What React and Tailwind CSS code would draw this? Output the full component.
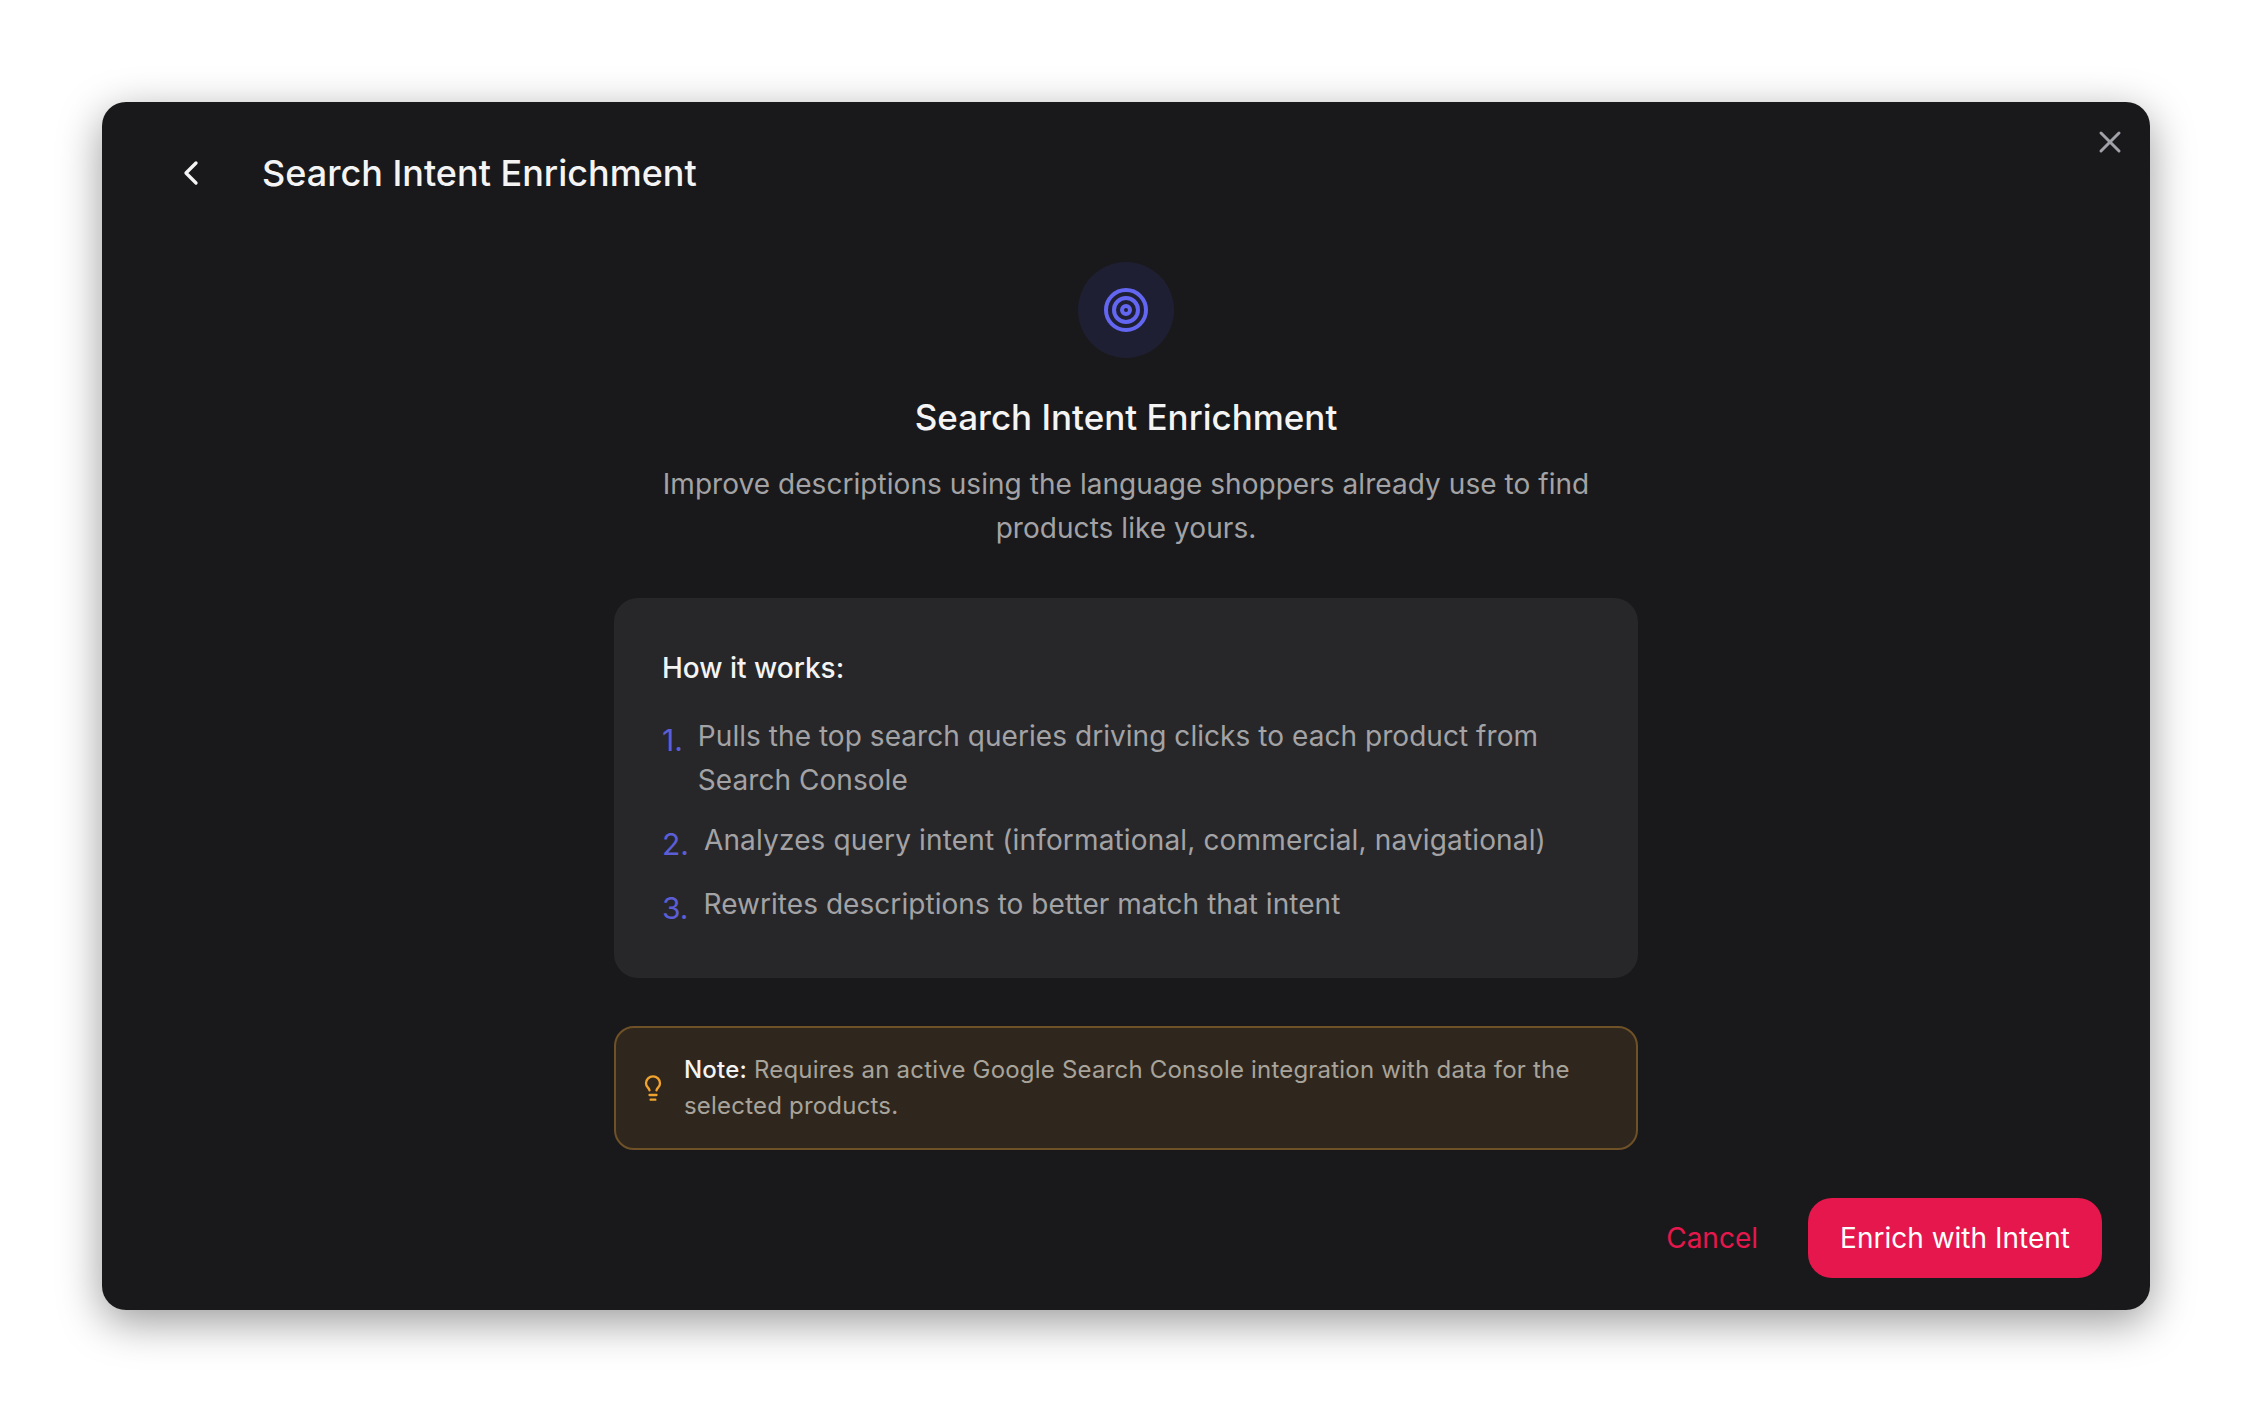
import { ChevronLeft, Lightbulb, Target, X } from "lucide-react";

const STEPS = [
  {
    num: "1.",
    text: "Pulls the top search queries driving clicks to each product from Search Console",
    row: "mb-[16px]",
    track: "tracking-[0.05px]",
  },
  {
    num: "2.",
    text: "Analyzes query intent (informational, commercial, navigational)",
    row: "mb-[16px]",
    track: "tracking-[0.15px]",
  },
  {
    num: "3.",
    text: "Rewrites descriptions to better match that intent",
    row: "",
    track: "tracking-[0.05px]",
  },
];

const App = () => {
  return (
    <div className="min-h-screen bg-white p-[102px] font-['Inter',sans-serif]">
      {/* Modal */}
      <div className="relative h-[1208px] w-[2048px] rounded-[24px] bg-[#19191b] shadow-[0_12px_44px_rgba(0,0,0,0.4)]">
        <button className="absolute right-[22px] top-[22px] text-[#a1a1aa]">
          <X size={36} strokeWidth={2} />
        </button>

        {/* Header */}
        <div className="flex h-[142px] items-center pl-[69px]">
          <ChevronLeft size={40} strokeWidth={2} className="text-[#f4f4f5]" />
          <h1 className="ml-[51px] text-[36px] font-medium leading-[48px] text-[#f4f4f5]">
            Search Intent Enrichment
          </h1>
        </div>

        <div className="mx-auto flex w-[1024px] flex-col items-center pt-[18px]">
          <div className="flex size-[96px] items-center justify-center rounded-full bg-[#1f1f33]">
            <Target size={48} strokeWidth={2} className="text-[#6366f1]" />
          </div>

          <h2 className="mt-[36px] text-[35px] font-medium leading-[46px] text-[#f4f4f5]">
            Search Intent Enrichment
          </h2>

          <p className="mt-[22px] w-[960px] text-center text-[28px] leading-[44px] tracking-[0.05px] text-[#a3a3a6]">
            Improve descriptions using the language shoppers already use to find products like yours.
          </p>

          {/* How it works */}
          <div className="mt-[48px] h-[380px] w-full rounded-[24px] bg-[#27272a] px-[48px] pt-[48px]">
            <h3 className="text-[28px] font-medium leading-[44px] text-[#f4f4f5]">How it works:</h3>
            <ol className="mt-[24px]">
              {STEPS.map((step) => (
                <li key={step.num} className={`flex gap-[15px] ${step.row}`}>
                  <span className="mt-[4px] shrink-0 text-[30px] leading-[44px] text-[#5b5ed6]">
                    {step.num}
                  </span>
                  <span className={`text-[28px] leading-[44px] text-[#a3a3a6] ${step.track}`}>
                    {step.text}
                  </span>
                </li>
              ))}
            </ol>
          </div>

          {/* Note */}
          <div className="mt-[48px] flex h-[124px] w-full items-center gap-[17px] rounded-[20px] border-2 border-[#6f5127] bg-[#2f271d] pl-[23px] pr-[40px]">
            <Lightbulb size={28} strokeWidth={2} className="shrink-0 text-[#f0a32f]" />
            <p className="text-[24px] leading-[36px] tracking-[0.2px] text-[#a8a49c]">
              <strong className="font-medium text-[#f4f4f5]">Note:</strong> Requires an active Google Search Console integration with data for the selected products.
            </p>
          </div>
        </div>

        {/* Footer */}
        <div className="mt-[48px] flex items-center justify-end pr-[48px]">
          <button className="mr-[50px] text-[28px] text-[#e6174c]">Cancel</button>
          <button className="h-[80px] w-[294px] rounded-[24px] bg-[#e6174c] text-[28px] text-white">
            Enrich with Intent
          </button>
        </div>
      </div>
    </div>
  );
};

export default App;
